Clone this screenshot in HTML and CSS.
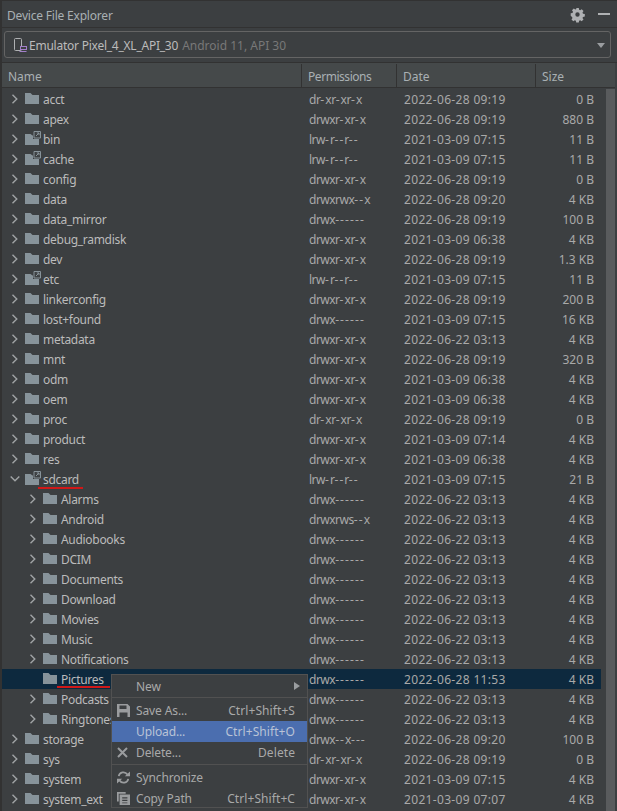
FILE: index.html
```html
<!DOCTYPE html>
<html lang="en">
<head>
<meta charset="utf-8">
<title>Device File Explorer</title>
<link rel="stylesheet" href="styles.css">
</head>
<body>
<svg class="defs" width="0" height="0" aria-hidden="true">
  <symbol id="folder" viewBox="0 0 14 11"><path d="M0 0h5.500l2 2H14v9H0z" fill="currentColor"/></symbol>
  <symbol id="link" viewBox="0 0 16 14">
    <path d="M0 3h5.500l2 1.500H8V8h6v6H0z" fill="currentColor"/>
    <path d="M9 .5h6.500v6.500H9zM11 5l3-3M11.800 2H14v2.200" fill="none" stroke="currentColor" stroke-width="1"/>
  </symbol>
  <symbol id="right" viewBox="0 0 10 10"><path d="M2.500.7 6.800 5 2.500 9.300" fill="none" stroke="currentColor" stroke-width="1.400"/></symbol>
  <symbol id="down" viewBox="0 0 10 10"><path d="M.7 2.500 5 6.800l4.300-4.300" fill="none" stroke="currentColor" stroke-width="1.400"/></symbol>
</svg>
<div class="panel">
  <header class="titlebar">
    <span class="title">Device File Explorer</span>
    <span class="tools">
      <svg class="gear" width="13" height="13" viewBox="0 0 13 13"><path fill-rule="evenodd" d="M5.200 0h2.600l.3 1.800 1.100.5 1.500-1 1.800 1.800-1 1.500.5 1.100 1.800.3v2.600l-1.800.3-.5 1.100 1 1.500-1.800 1.800-1.500-1-1.100.5-.3 1.800H5.200l-.3-1.800-1.100-.5-1.500 1-1.800-1.800 1-1.500-.5-1.100L-.3 7.800V5.200l1.800-.3.500-1.100-1-1.500 1.800-1.800 1.500 1 1.100-.5zM6.500 4.300a2.200 2.200 0 1 0 0 4.400 2.200 2.200 0 0 0 0-4.400z" fill="currentColor"/></svg>
      <span class="minimize"></span>
    </span>
  </header>
  <div class="combo-wrap">
    <div class="combo">
      <svg class="device" width="13" height="15" viewBox="0 0 13 15">
        <rect x=".5" y=".5" width="7" height="12" rx="1" fill="none" stroke="#afb1b3"/>
        <rect x="6.500" y="8.500" width="6" height="3" fill="#3c3f41" stroke="#a27fc9"/>
        <path d="M5.500 13.500h7" stroke="#a27fc9"/>
      </svg>
      <span class="device-name">Emulator Pixel_4_XL_API_30</span>
      <span class="device-info">Android 11, API 30</span>
      <span class="caret"></span>
    </div>
  </div>
  <div class="table">
    <div class="thead">
      <span class="th th-name">Name</span>
      <span class="th th-perm">Permissions</span>
      <span class="th th-date">Date</span>
      <span class="th th-size">Size</span>
    </div>
    <div class="body">
      <div class="rows">
        <div class="row"><span class="name"><svg class="arrow"><use href="#right"/></svg><svg class="fld"><use href="#folder"/></svg><span>acct</span></span><span class="perm">dr<b>-</b>xr<b>-</b>xr<b>-</b>x</span><span class="date">2022-06-28 09:19</span><span class="size">0 B</span></div>
        <div class="row"><span class="name"><svg class="arrow"><use href="#right"/></svg><svg class="fld"><use href="#folder"/></svg><span>apex</span></span><span class="perm">drwxr<b>-</b>xr<b>-</b>x</span><span class="date">2022-06-28 09:19</span><span class="size">880 B</span></div>
        <div class="row"><span class="name"><svg class="arrow"><use href="#right"/></svg><svg class="lnk"><use href="#link"/></svg><span>bin</span></span><span class="perm">lrw<b>-</b>r<b>--</b>r<b>--</b></span><span class="date">2021-03-09 07:15</span><span class="size">11 B</span></div>
        <div class="row"><span class="name"><svg class="arrow"><use href="#right"/></svg><svg class="lnk"><use href="#link"/></svg><span>cache</span></span><span class="perm">lrw<b>-</b>r<b>--</b>r<b>--</b></span><span class="date">2021-03-09 07:15</span><span class="size">11 B</span></div>
        <div class="row"><span class="name"><svg class="arrow"><use href="#right"/></svg><svg class="fld"><use href="#folder"/></svg><span>config</span></span><span class="perm">drwxr<b>-</b>xr<b>-</b>x</span><span class="date">2022-06-28 09:19</span><span class="size">0 B</span></div>
        <div class="row"><span class="name"><svg class="arrow"><use href="#right"/></svg><svg class="fld"><use href="#folder"/></svg><span>data</span></span><span class="perm">drwxrwx<b>--</b>x</span><span class="date">2022-06-28 09:20</span><span class="size">4 KB</span></div>
        <div class="row"><span class="name"><svg class="arrow"><use href="#right"/></svg><svg class="fld"><use href="#folder"/></svg><span>data_mirror</span></span><span class="perm">drwx<b>------</b></span><span class="date">2022-06-28 09:19</span><span class="size">100 B</span></div>
        <div class="row"><span class="name"><svg class="arrow"><use href="#right"/></svg><svg class="fld"><use href="#folder"/></svg><span>debug_ramdisk</span></span><span class="perm">drwxr<b>-</b>xr<b>-</b>x</span><span class="date">2021-03-09 06:38</span><span class="size">4 KB</span></div>
        <div class="row"><span class="name"><svg class="arrow"><use href="#right"/></svg><svg class="fld"><use href="#folder"/></svg><span>dev</span></span><span class="perm">drwxr<b>-</b>xr<b>-</b>x</span><span class="date">2022-06-28 09:19</span><span class="size">1.3 KB</span></div>
        <div class="row"><span class="name"><svg class="arrow"><use href="#right"/></svg><svg class="lnk"><use href="#link"/></svg><span>etc</span></span><span class="perm">lrw<b>-</b>r<b>--</b>r<b>--</b></span><span class="date">2021-03-09 07:15</span><span class="size">11 B</span></div>
        <div class="row"><span class="name"><svg class="arrow"><use href="#right"/></svg><svg class="fld"><use href="#folder"/></svg><span>linkerconfig</span></span><span class="perm">drwxr<b>-</b>xr<b>-</b>x</span><span class="date">2022-06-28 09:19</span><span class="size">200 B</span></div>
        <div class="row"><span class="name"><svg class="arrow"><use href="#right"/></svg><svg class="fld"><use href="#folder"/></svg><span>lost+found</span></span><span class="perm">drwx<b>------</b></span><span class="date">2021-03-09 07:15</span><span class="size">16 KB</span></div>
        <div class="row"><span class="name"><svg class="arrow"><use href="#right"/></svg><svg class="fld"><use href="#folder"/></svg><span>metadata</span></span><span class="perm">drwxr<b>-</b>xr<b>-</b>x</span><span class="date">2022-06-22 03:13</span><span class="size">4 KB</span></div>
        <div class="row"><span class="name"><svg class="arrow"><use href="#right"/></svg><svg class="fld"><use href="#folder"/></svg><span>mnt</span></span><span class="perm">drwxr<b>-</b>xr<b>-</b>x</span><span class="date">2022-06-28 09:19</span><span class="size">320 B</span></div>
        <div class="row"><span class="name"><svg class="arrow"><use href="#right"/></svg><svg class="fld"><use href="#folder"/></svg><span>odm</span></span><span class="perm">drwxr<b>-</b>xr<b>-</b>x</span><span class="date">2021-03-09 06:38</span><span class="size">4 KB</span></div>
        <div class="row"><span class="name"><svg class="arrow"><use href="#right"/></svg><svg class="fld"><use href="#folder"/></svg><span>oem</span></span><span class="perm">drwxr<b>-</b>xr<b>-</b>x</span><span class="date">2021-03-09 06:38</span><span class="size">4 KB</span></div>
        <div class="row"><span class="name"><svg class="arrow"><use href="#right"/></svg><svg class="fld"><use href="#folder"/></svg><span>proc</span></span><span class="perm">dr<b>-</b>xr<b>-</b>xr<b>-</b>x</span><span class="date">2022-06-28 09:19</span><span class="size">0 B</span></div>
        <div class="row"><span class="name"><svg class="arrow"><use href="#right"/></svg><svg class="fld"><use href="#folder"/></svg><span>product</span></span><span class="perm">drwxr<b>-</b>xr<b>-</b>x</span><span class="date">2021-03-09 07:14</span><span class="size">4 KB</span></div>
        <div class="row"><span class="name"><svg class="arrow"><use href="#right"/></svg><svg class="fld"><use href="#folder"/></svg><span>res</span></span><span class="perm">drwxr<b>-</b>xr<b>-</b>x</span><span class="date">2021-03-09 06:38</span><span class="size">4 KB</span></div>
        <div class="row"><span class="name"><svg class="arrow"><use href="#down"/></svg><svg class="lnk"><use href="#link"/></svg><span class="mark mark-sdcard">sdcard</span></span><span class="perm">lrw<b>-</b>r<b>--</b>r<b>--</b></span><span class="date">2021-03-09 07:15</span><span class="size">21 B</span></div>
        <div class="row child"><span class="name"><svg class="arrow"><use href="#right"/></svg><svg class="fld"><use href="#folder"/></svg><span>Alarms</span></span><span class="perm">drwx<b>------</b></span><span class="date">2022-06-22 03:13</span><span class="size">4 KB</span></div>
        <div class="row child"><span class="name"><svg class="arrow"><use href="#right"/></svg><svg class="fld"><use href="#folder"/></svg><span>Android</span></span><span class="perm">drwxrws<b>--</b>x</span><span class="date">2022-06-22 03:13</span><span class="size">4 KB</span></div>
        <div class="row child"><span class="name"><svg class="arrow"><use href="#right"/></svg><svg class="fld"><use href="#folder"/></svg><span>Audiobooks</span></span><span class="perm">drwx<b>------</b></span><span class="date">2022-06-22 03:13</span><span class="size">4 KB</span></div>
        <div class="row child"><span class="name"><svg class="arrow"><use href="#right"/></svg><svg class="fld"><use href="#folder"/></svg><span>DCIM</span></span><span class="perm">drwx<b>------</b></span><span class="date">2022-06-22 03:13</span><span class="size">4 KB</span></div>
        <div class="row child"><span class="name"><svg class="arrow"><use href="#right"/></svg><svg class="fld"><use href="#folder"/></svg><span>Documents</span></span><span class="perm">drwx<b>------</b></span><span class="date">2022-06-22 03:13</span><span class="size">4 KB</span></div>
        <div class="row child"><span class="name"><svg class="arrow"><use href="#right"/></svg><svg class="fld"><use href="#folder"/></svg><span>Download</span></span><span class="perm">drwx<b>------</b></span><span class="date">2022-06-22 03:13</span><span class="size">4 KB</span></div>
        <div class="row child"><span class="name"><svg class="arrow"><use href="#right"/></svg><svg class="fld"><use href="#folder"/></svg><span>Movies</span></span><span class="perm">drwx<b>------</b></span><span class="date">2022-06-22 03:13</span><span class="size">4 KB</span></div>
        <div class="row child"><span class="name"><svg class="arrow"><use href="#right"/></svg><svg class="fld"><use href="#folder"/></svg><span>Music</span></span><span class="perm">drwx<b>------</b></span><span class="date">2022-06-22 03:13</span><span class="size">4 KB</span></div>
        <div class="row child"><span class="name"><svg class="arrow"><use href="#right"/></svg><svg class="fld"><use href="#folder"/></svg><span>Notifications</span></span><span class="perm">drwx<b>------</b></span><span class="date">2022-06-22 03:13</span><span class="size">4 KB</span></div>
        <div class="row child selected"><span class="name"><span class="arrow-gap"></span><svg class="fld"><use href="#folder"/></svg><span class="mark mark-pictures">Pictures</span></span><span class="perm">drwx<b>------</b></span><span class="date">2022-06-28 11:53</span><span class="size">4 KB</span></div>
        <div class="row child"><span class="name"><svg class="arrow"><use href="#right"/></svg><svg class="fld"><use href="#folder"/></svg><span>Podcasts</span></span><span class="perm">drwx<b>------</b></span><span class="date">2022-06-22 03:13</span><span class="size">4 KB</span></div>
        <div class="row child"><span class="name"><svg class="arrow"><use href="#right"/></svg><svg class="fld"><use href="#folder"/></svg><span>Ringtones</span></span><span class="perm">drwx<b>------</b></span><span class="date">2022-06-22 03:13</span><span class="size">4 KB</span></div>
        <div class="row"><span class="name"><svg class="arrow"><use href="#right"/></svg><svg class="fld"><use href="#folder"/></svg><span>storage</span></span><span class="perm">drwx<b>--</b>x<b>---</b></span><span class="date">2022-06-28 09:20</span><span class="size">100 B</span></div>
        <div class="row"><span class="name"><svg class="arrow"><use href="#right"/></svg><svg class="fld"><use href="#folder"/></svg><span>sys</span></span><span class="perm">dr<b>-</b>xr<b>-</b>xr<b>-</b>x</span><span class="date">2022-06-28 09:19</span><span class="size">0 B</span></div>
        <div class="row"><span class="name"><svg class="arrow"><use href="#right"/></svg><svg class="fld"><use href="#folder"/></svg><span>system</span></span><span class="perm">drwxr<b>-</b>xr<b>-</b>x</span><span class="date">2021-03-09 07:15</span><span class="size">4 KB</span></div>
        <div class="row"><span class="name"><svg class="arrow"><use href="#right"/></svg><svg class="fld"><use href="#folder"/></svg><span>system_ext</span></span><span class="perm">drwxr<b>-</b>xr<b>-</b>x</span><span class="date">2021-03-09 07:07</span><span class="size">4 KB</span></div>
      </div>
      <div class="scrollbar"></div>
    </div>
  </div>
  <div class="menu">
    <div class="mi mi-new"><span class="mi-ic"></span><span class="mi-label">New</span><span class="submenu"></span></div>
    <div class="msep"></div>
    <div class="mi"><span class="mi-ic"><svg width="13" height="13" viewBox="0 0 13 13"><path fill-rule="evenodd" d="M0 0h10.500L13 2.500V13H0zM2.500 1.500v3.500h7V1.500zM2.500 8.500V13h8V8.500z" fill="currentColor"/></svg></span><span class="mi-label">Save As...</span><span class="mi-key">Ctrl+Shift+S</span></div>
    <div class="mi mi-active"><span class="mi-ic"></span><span class="mi-label">Upload...</span><span class="mi-key">Ctrl+Shift+O</span></div>
    <div class="mi"><span class="mi-ic"><svg width="11" height="11" viewBox="0 0 11 11"><path d="M1 1l9 9M10 1l-9 9" fill="none" stroke="currentColor" stroke-width="2"/></svg></span><span class="mi-label">Delete...</span><span class="mi-key">Delete</span></div>
    <div class="msep"></div>
    <div class="mi"><span class="mi-ic"><svg width="13" height="13" viewBox="0 0 15 15"><path d="M2 6a5.500 5.500 0 0 1 10-2M13 9a5.500 5.500 0 0 1-10 2" fill="none" stroke="currentColor" stroke-width="2"/><path d="M9 6h6V.5zM6 9H0v5.500z" fill="currentColor"/></svg></span><span class="mi-label">Synchronize</span></div>
    <div class="mi"><span class="mi-ic"><svg width="13" height="13" viewBox="0 0 15 15"><path d="M0 0h2v11H0zM0 0h10v2H0z" fill="currentColor"/><path fill-rule="evenodd" d="M3 3h12v12H3zM6 6v1.500h6V6zM6 9v1.500h6V9zM6 12v1h6v-1z" fill="currentColor"/></svg></span><span class="mi-label">Copy Path</span><span class="mi-key">Ctrl+Shift+C</span></div>
  </div>
</div>
</body>
</html>
```
FILE: styles.css
```css
* { box-sizing: border-box; }
html, body { margin: 0; height: 100%; overflow: hidden; }
body {
  background: #3c3f41;
  color: #bbbbbb;
  font-family: "Noto Sans", "Open Sans", sans-serif;
  font-size: 12px;
}
.defs { position: absolute; }
.panel { position: relative; height: 811px; width: 617px; border-left: 2px solid #323232; border-top: 1px solid #323232; }
.titlebar {
  height: 27px;
  display: flex;
  align-items: center;
  justify-content: space-between;
  padding: 0 7px 0 5px;
  border-bottom: 1px solid #323232;
}
.title { color: #a9b0b3; font-size: 12px; letter-spacing: -0.2px; padding-top: 2px; }
.tools { display: flex; align-items: center; gap: 14px; color: #afb1b3; }
.gear { display: block; overflow: visible; }
.minimize { width: 12px; height: 2px; background: #afb1b3; }
.combo-wrap { height: 35px; padding: 3px 6px 4px 4px; margin-left: -2px; border-bottom: 1px solid #323232; }
.combo {
  height: 27px;
  display: flex;
  align-items: center;
  border: 1px solid #646464;
  border-radius: 3px;
  padding: 1px 5px 0 9px;
  background: #3c3f41;
}
.device { flex: none; margin-right: 2px; }
.device-name { color: #bbbbbb; margin-right: 4px; letter-spacing: -0.24px; }
.device-info { color: #787878; }
.caret {
  margin-left: auto;
  width: 0;
  height: 0;
  border-left: 4.500px solid transparent;
  border-right: 4.500px solid transparent;
  border-top: 5px solid #9a9da0;
}
.table { width: 615px; }
.thead {
  height: 25px;
  display: flex;
  align-items: flex-end;
  background: #45494a;
  width: 613px;
  border-bottom: 1px solid #323232;
}
.th { height: 23px; display: flex; align-items: center; color: #a9b0b3; padding: 2px 0 0 6px; border-right: 1px solid #323232; }
.th-name { width: 300px; }
.th-perm { width: 95px; letter-spacing: -0.45px; }
.th-date { width: 139px; }
.th-size { flex: 1; border-right: 0; }
.body { display: flex; padding-top: 1px; }
.rows { width: 599px; }
.row { height: 20px; display: flex; align-items: center; }
.name { width: 307px; display: flex; align-items: center; padding-left: 8px; letter-spacing: -0.3px; }
.child .name { padding-left: 26px; }
.arrow, .arrow-gap { width: 10px; height: 10px; flex: none; color: #a0a3a5; margin-right: 5px; }
.fld { width: 14px; height: 11px; flex: none; color: #87939a; margin-right: 4px; margin-top: -1px; }
.lnk { width: 16px; height: 14px; flex: none; color: #87939a; margin-right: 2px; margin-top: -3px; }
.perm { width: 95px; color: #a9a9a9; letter-spacing: -0.5px; }
.perm b { font-weight: normal; letter-spacing: 1.1px; }
.date { width: 130px; color: #a9a9a9; letter-spacing: 0.33px; }
.size { flex: 1; text-align: right; color: #a9a9a9; padding-right: 7px; }
.selected { background: #0d293e; }
.mark { position: relative; }
.mark::after { content: ""; position: absolute; height: 2px; background: #d01818; }
.mark-sdcard::after { left: -5px; width: 45px; bottom: -1px; }
.mark-pictures::after { left: -4px; width: 53px; bottom: 0; }
.scrollbar { width: 9px; margin-left: 5px; height: 730px; background: #595b5d; }
.menu {
  position: absolute;
  left: 109px;
  top: 673px;
  width: 197px;
  height: 134px;
  background: #3c3f41;
  border: 1px solid #515151;
}
.mi { height: 21px; display: flex; align-items: center; padding: 0 12px 0 5px; color: #a9a9a9; }
.mi-new { padding-top: 1px; }
.mi-ic { width: 19px; height: 16px; display: flex; align-items: center; color: #9a9c9e; flex: none; }
.mi-label { letter-spacing: -0.12px; }
.mi-key { margin-left: auto; letter-spacing: 0.08px; }
.mi-active { background: #4b6eaf; color: #b9c3d6; }
.msep { height: 1px; background: #515151; margin: 1px 0 2px; }
.submenu {
  margin-left: auto;
  width: 0; height: 0;
  border-top: 4px solid transparent;
  border-bottom: 4px solid transparent;
  border-left: 6px solid #9a9da0;
  margin-right: -5px;
}
```
